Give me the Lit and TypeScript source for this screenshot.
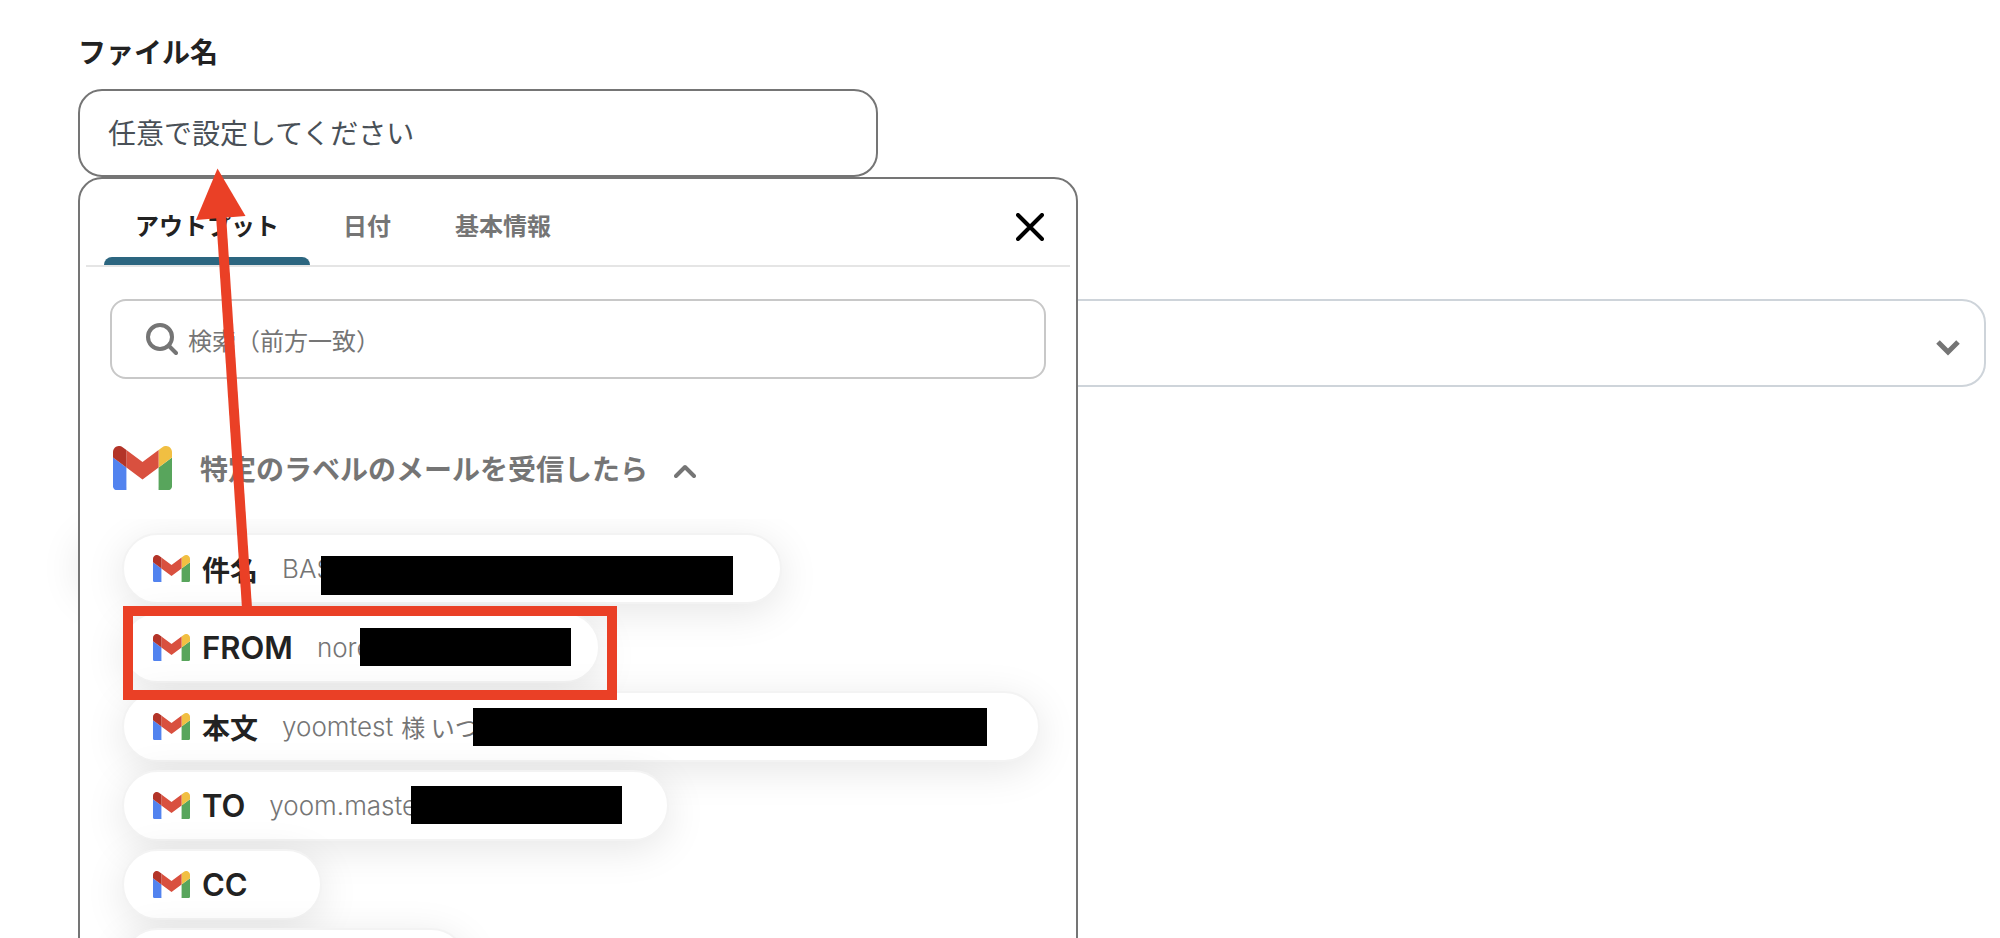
import { LitElement, html, css, svg } from "lit";
import { customElement, property, state } from "lit/decorators.js";
import { classMap } from "lit/directives/class-map.js";

interface OutputItem {
  name: string;
  value: string;
  kana?: string;
  width: number;
}

const OUTPUTS: OutputItem[] = [
  { name: "件名", value: "BAS", width: 660 },
  { name: "FROM", value: "nore", width: 478 },
  { name: "本文", value: "yoomtest", kana: "様 いつ", width: 918 },
  { name: "TO", value: "yoom.maste", width: 547 },
  { name: "CC", value: "", width: 200 },
  { name: "", value: "", width: 345 },
];

const TABS = ["アウトプット", "日付", "基本情報"];

@customElement("gmail-logo")
export class GmailLogo extends LitElement {
  static styles = css`
    :host { display: block; flex: none; }
    svg { display: block; width: 100%; height: auto; }
  `;
  render() {
    return html`<svg viewBox="52 42 88 66" aria-hidden="true">
      <path fill="#5283ef" d="M58 108h14V74L52 59v43c0 3.32 2.69 6 6 6"/>
      <path fill="#58a55c" d="M120 108h14c3.32 0 6-2.69 6-6V59l-20 15"/>
      <path fill="#f1bf42" d="M120 48v26l20-15v-8c0-7.42-8.47-11.65-14.4-7.2"/>
      <path fill="#d9503f" d="M72 74V48l24 18 24-18v26L96 92"/>
      <path fill="#b33428" d="M52 51v8l20 15V48l-5.6-4.2c-5.94-4.45-14.4-.22-14.4 7.2"/>
    </svg>`;
  }
}

@customElement("output-chip")
export class OutputChip extends LitElement {
  @property({ attribute: false }) item!: OutputItem;

  static styles = css`
    :host { display: block; }
    .chip {
      display: flex;
      align-items: center;
      box-sizing: border-box;
      max-width: 100%;
      height: 71px;
      padding: 0 29px;
      border: 2px solid #f3f3f3;
      border-radius: 36px;
      background: #fff;
      box-shadow: 0 8px 40px rgba(0, 0, 0, 0.1);
      font-family: Inter, "Noto Sans CJK JP", sans-serif;
      text-align: left;
      white-space: nowrap;
      overflow: hidden;
      cursor: pointer;
    }
    gmail-logo { width: 37px; }
    .name {
      margin-left: 12px;
      color: #222;
      font-size: 28px;
      font-weight: 700;
    }
    .name.latin { font-size: 31px; font-weight: 600; }
    .value {
      margin-left: 24px;
      color: #757575;
      font-size: 26px;
      font-weight: 300;
    }
    .kana {
      margin-left: 8px;
      color: #757575;
      font: 400 24px "Noto Sans CJK JP", sans-serif;
    }
  `;
  render() {
    const { name, value, kana, width } = this.item;
    const latin = /^[A-Z]+$/.test(name);
    return html`<button class="chip" type="button" style="width:${width}px">
      <gmail-logo></gmail-logo>
      <span class=${classMap({ name: true, latin })}>${name}</span>
      <span class="value">${value}</span>
      ${kana ? html`<span class="kana">${kana}</span>` : null}
    </button>`;
  }
}

@customElement("app-root")
export class AppRoot extends LitElement {
  @state() private tab = 0;

  static styles = css`
    :host {
      display: block;
      position: relative;
      height: 100vh;
      overflow: hidden;
      box-sizing: border-box;
      padding: 31px 14px 0 78px;
      background: #fff;
      color: #222;
      font-family: "Noto Sans CJK JP", sans-serif;
    }
    .label {
      display: block;
      margin-bottom: 18px;
      font-size: 28px;
      line-height: 40px;
      font-weight: 700;
    }
    .field { position: relative; max-width: 800px; z-index: 2; }
    .file {
      display: block;
      box-sizing: border-box;
      width: 100%;
      height: 88px;
      padding: 0 28px 2px;
      border: 2px solid #757575;
      border-radius: 24px;
      background: #fff;
      color: #495057;
      font: 400 28px "Noto Sans CJK JP", sans-serif;
      outline: none;
    }
    .file::placeholder, .query::placeholder { color: inherit; opacity: 1; }
    .panel {
      position: absolute;
      top: 100%;
      left: 0;
      box-sizing: border-box;
      width: 1000px;
      height: 100vh;
      border: 2px solid #757575;
      border-radius: 24px;
      background: #fff;
    }
    .head {
      display: flex;
      justify-content: space-between;
      align-items: center;
      height: 86px;
      margin: 0 6px;
      padding: 0 18px;
      border-bottom: 2px solid #e5e5e5;
    }
    .tabs { display: flex; gap: 2px; height: 100%; }
    .tab {
      position: relative;
      padding: 4px 31px 0;
      border: 0;
      background: none;
      color: #757575;
      font: 700 24px "Noto Sans CJK JP", sans-serif;
      cursor: pointer;
    }
    .tab.active { color: #222; }
    .tab.active::after {
      content: "";
      position: absolute;
      left: 0;
      right: 0;
      bottom: 0;
      height: 8px;
      border-radius: 8px 8px 0 0;
      background: #2c6680;
    }
    .icon-button {
      display: flex;
      padding: 8px;
      border: 0;
      background: none;
      cursor: pointer;
    }
    .close { margin-top: 10px; }
    svg { display: block; flex: none; }
    .body { padding: 32px 30px 0; }
    .search {
      display: flex;
      align-items: center;
      gap: 10px;
      box-sizing: border-box;
      height: 80px;
      padding: 0 32px;
      border: 2px solid #c8c8c8;
      border-radius: 16px;
      color: #757575;
    }
    .query {
      flex: 1;
      min-width: 0;
      padding: 0;
      border: 0;
      outline: none;
      background: none;
      color: #757575;
      font: 400 24px "Noto Sans CJK JP", sans-serif;
    }
    .group {
      display: flex;
      align-items: center;
      height: 140px;
      padding: 38px 3px 0;
      box-sizing: border-box;
      color: #757575;
    }
    .group gmail-logo { width: 59px; }
    .group-name { margin: 0 18px 0 28px; font-size: 28px; line-height: 40px; font-weight: 700; }
    .fold { padding-top: 14px; }
    .chips {
      display: flex;
      flex-direction: column;
      gap: 8px;
      margin: 0 -30px;
      padding: 14px 32px 100px 42px;
      overflow: hidden;
    }
    .behind {
      display: flex;
      flex-direction: column;
      align-items: flex-start;
      gap: 146px;
      margin-top: 122px;
    }
    .select-wrap { position: relative; width: 100%; }
    .choice {
      display: block;
      appearance: none;
      width: 100%;
      height: 88px;
      padding: 0 80px 0 28px;
      border: 2px solid #ced4da;
      border-radius: 24px;
      background: #fff;
      font: 400 28px "Noto Sans CJK JP", sans-serif;
    }
    .arrow { position: absolute; right: 26px; top: 40px; pointer-events: none; }
    .save {
      width: 200px;
      height: 70px;
      border: 0;
      border-radius: 35px;
      background: #fff;
      box-shadow: 0 0 40px rgba(0, 0, 0, 0.1);
    }
    .notes {
      position: absolute;
      top: 0;
      left: 0;
      z-index: 3;
      pointer-events: none;
    }
  `;

  render() {
    return html`
      <label class="label" for="file">ファイル名</label>
      <div class="field">
        <input class="file" id="file" type="text" placeholder="任意で設定してください" />
        <section class="panel">
          <div class="head">
            <div class="tabs" role="tablist">
              ${TABS.map(
                (t, i) => html`<button type="button" role="tab" aria-selected=${i === this.tab}
                  class=${classMap({ tab: true, active: i === this.tab })}
                  @click=${() => (this.tab = i)}>${t}</button>`
              )}
            </div>
            <button class="icon-button close" type="button" aria-label="閉じる">
              <svg width="28" height="28" viewBox="0 0 28 28" fill="none" stroke="#000" stroke-width="4" stroke-linecap="round">
                <path d="M2 2l24 24M26 2L2 26" />
              </svg>
            </button>
          </div>
          <div class="body">
            <div class="search">
              <svg width="34" height="34" viewBox="0 0 34 34" fill="none" stroke="currentColor" stroke-width="4" stroke-linecap="round">
                <circle cx="16" cy="15" r="12" /><path d="M25 24l7 7" />
              </svg>
              <input class="query" type="search" aria-label="検索" placeholder="検索（前方一致）" />
            </div>
            <div class="group">
              <gmail-logo></gmail-logo>
              <span class="group-name">特定のラベルのメールを受信したら</span>
              <button class="icon-button fold" type="button" aria-label="折りたたむ">
                <svg width="22" height="14" viewBox="0 0 22 14" fill="none" stroke="#757575" stroke-width="4" stroke-linecap="round" stroke-linejoin="round">
                  <path d="M2 12l9-9 9 9" />
                </svg>
              </button>
            </div>
            <div class="chips">
              ${OUTPUTS.map((o) => html`<output-chip .item=${o}></output-chip>`)}
            </div>
          </div>
        </section>
      </div>
      <div class="behind">
        <div class="select-wrap">
          <select class="choice" aria-label="選択"><option></option></select>
          <svg class="arrow" width="24" height="17" viewBox="0 0 24 17" fill="none" stroke="#757575" stroke-width="5">
            <path d="M2 3l10 10 10-10" />
          </svg>
        </div>
        <button class="save" type="button" aria-label="保存"></button>
      </div>
      <svg class="notes" width="1080" height="938" viewBox="0 0 1080 938" aria-hidden="true">
        ${svg`
          <g fill="#000">
            <rect x="321" y="556" width="412" height="39" />
            <rect x="360" y="628" width="211" height="38" />
            <rect x="473" y="708" width="514" height="38" />
            <rect x="411" y="786" width="211" height="38" />
          </g>
          <rect x="128" y="611" width="484" height="84" fill="none" stroke="#ea4026" stroke-width="10" />
          <path d="M221 215L247 608" stroke="#ea4026" stroke-width="10" />
          <path d="M217.500 168.500L245.500 216L196 220Z" fill="#ea4026" />
        `}
      </svg>
    `;
  }
}
